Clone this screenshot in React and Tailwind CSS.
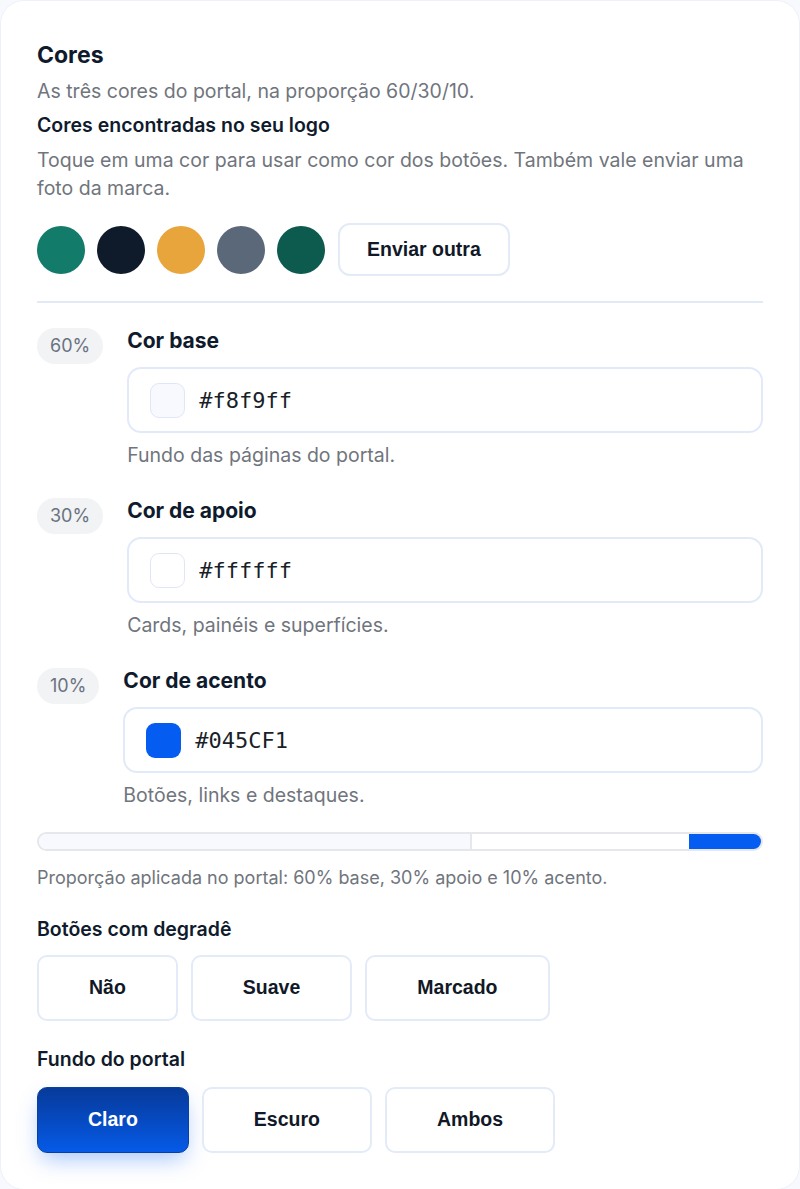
import React, { useState } from 'react';

const sans = { fontFamily: 'Inter, "Noto Sans", sans-serif' };

const swatches = ['#127b69', '#0f1b2b', '#e8a53c', '#5b6879', '#0d5a4e'];

const roles = [
  { pct: '60%', label: 'Cor base', hex: '#f8f9ff', hint: 'Fundo das páginas do portal.', swatch: 'bg-[#f8f9ff] border border-[#dfe7f7]' },
  { pct: '30%', label: 'Cor de apoio', hex: '#ffffff', hint: 'Cards, painéis e superfícies.', swatch: 'bg-white border border-[#dfe7f7]' },
  { pct: '10%', label: 'Cor de acento', hex: '#045CF1', hint: 'Botões, links e destaques.', swatch: 'bg-[#045cf1]' },
];

const ChoiceButton = ({ active, children, onClick }) => (
  <button
    onClick={onClick}
    className={
      active
        ? 'h-[66px] px-[50px] rounded-[10px] text-[19.5px] font-bold text-white bg-gradient-to-b from-[#063a9a] to-[#055ae8] border border-[#0a3f9e] shadow-[0_10px_22px_-4px_rgba(4,92,241,0.35)] font-["Liberation_Sans",Arial,sans-serif]'
        : 'h-[66px] px-[50px] rounded-[10px] text-[19.5px] font-bold text-[#111827] bg-white border-2 border-[#e3ebf9] font-["Liberation_Sans",Arial,sans-serif]'
    }
  >
    {children}
  </button>
);

export default function App() {
  const [gradient, setGradient] = useState(null);
  const [fundo, setFundo] = useState('Claro');

  return (
    <div className="min-h-screen bg-[#f8f9ff]" style={sans}>
      <div className="bg-white rounded-[24px] border border-[#eef1f7] px-[36px] pt-[40px] pb-[36px] min-h-[1189px]">
        <h2 className="text-[23px] leading-[28px] font-bold text-[#0f1b2d]">Cores</h2>
        <p className="mt-[9px] text-[19.5px] leading-[26px] text-[#70757d]">
          As três cores do portal, na proporção 60/30/10.
        </p>
        <h3 className="mt-[8px] text-[19.5px] leading-[26px] font-semibold text-[#0f1b2d]">
          Cores encontradas no seu logo
        </h3>
        <p className="mt-[8px] text-[19.5px] leading-[28px] text-[#70757d]">
          Toque em uma cor para usar como cor dos botões. Também vale enviar uma foto da marca.
        </p>

        <div className="mt-[21px] flex items-center gap-[12px] h-[53px]">
          {swatches.map((c) => (
            <button key={c} className="w-[48px] h-[48px] rounded-full" style={{ backgroundColor: c }} />
          ))}
          <button className='ml-[1px] h-[53px] px-[27px] rounded-[12px] bg-white border-2 border-[#e3ebf9] text-[19.5px] font-bold text-[#111827] font-["Liberation_Sans",Arial,sans-serif]'>
            Enviar outra
          </button>
        </div>

        <div className="mt-[25px] h-[2px] bg-[#e3eaf7]" />

        <div className="mt-[24px] flex flex-col gap-[30px]">
          {roles.map((r) => (
            <div key={r.pct} className="flex items-start gap-[24px]">
              <span className="mt-[1px] h-[36px] px-[13px] rounded-full bg-[#f1f3f5] text-[18px] leading-[36px] text-[#6b7280]">
                {r.pct}
              </span>
              <div className="flex-1">
                <div className="text-[21px] leading-[28px] font-bold text-[#0f1b2d]">{r.label}</div>
                <div className="mt-[12px] h-[66px] rounded-[14px] border-2 border-[#e2eafa] bg-white flex items-center px-[21px] gap-[14px]">
                  <span className={`w-[35px] h-[35px] rounded-[9px] ${r.swatch}`} />
                  <span className='text-[22px] text-[#1a1f29] font-["DejaVu_Sans_Mono",monospace]'>{r.hex}</span>
                </div>
                <p className="mt-[10px] text-[19.5px] leading-[24px] text-[#70757d]">{r.hint}</p>
              </div>
            </div>
          ))}
        </div>

        <div className="mt-[25px] h-[19px] rounded-full border-2 border-[#e5e7eb] overflow-hidden flex">
          <div className="w-[60%] bg-[#f8f9ff] border-r-2 border-[#e5e7eb]" />
          <div className="w-[30%] bg-white" />
          <div className="w-[10%] bg-[#045cf1]" />
        </div>
        <p className="mt-[16px] text-[18px] leading-[22px] text-[#70757d]">
          Proporção aplicada no portal: 60% base, 30% apoio e 10% acento.
        </p>

        <h3 className="mt-[27px] text-[19.5px] leading-[26px] font-semibold text-[#0f1b2d]">Botões com degradê</h3>
        <div className="mt-[13px] flex gap-[13px]">
          {['Não', 'Suave', 'Marcado'].map((o) => (
            <ChoiceButton key={o} active={gradient === o} onClick={() => setGradient(o)}>
              {o}
            </ChoiceButton>
          ))}
        </div>

        <h3 className="mt-[25px] text-[19.5px] leading-[26px] font-semibold text-[#0f1b2d]">Fundo do portal</h3>
        <div className="mt-[15px] flex gap-[13px]">
          {['Claro', 'Escuro', 'Ambos'].map((o) => (
            <ChoiceButton key={o} active={fundo === o} onClick={() => setFundo(o)}>
              {o}
            </ChoiceButton>
          ))}
        </div>
      </div>
    </div>
  );
}
